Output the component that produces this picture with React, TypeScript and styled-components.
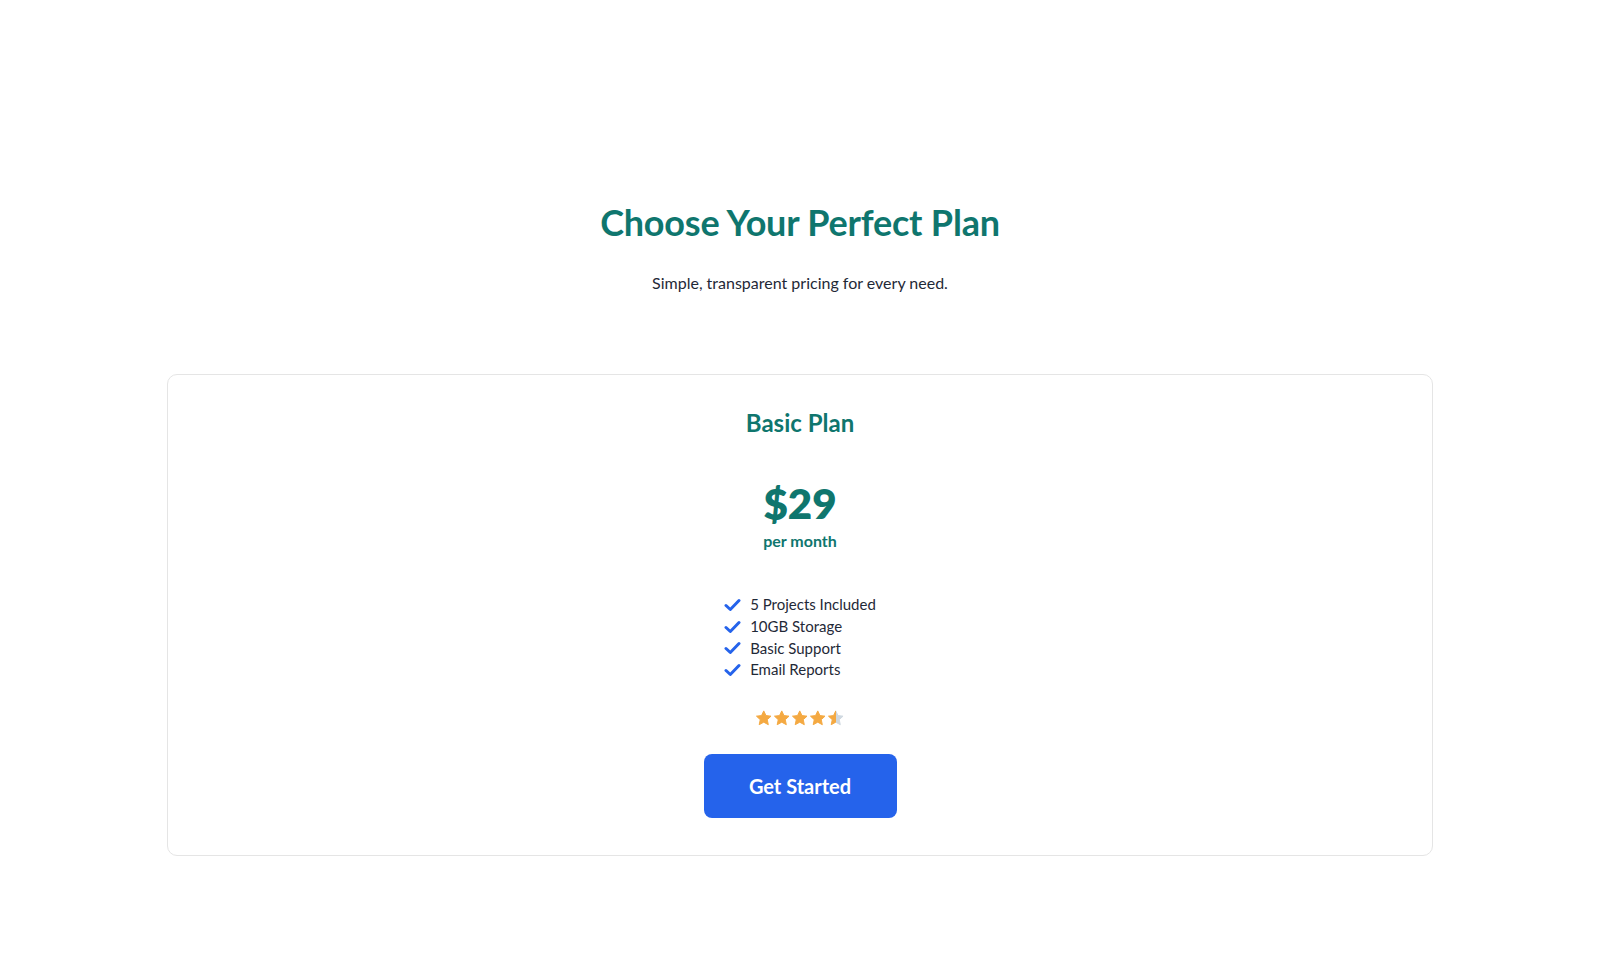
import styled, { createGlobalStyle } from 'styled-components';

const GlobalStyle = createGlobalStyle`
  body {
    margin: 0;
    background: #ffffff;
    font-family: Lato, "Open Sans", sans-serif;
  }
`;

const teal = '#0f766e';
const blue = '#2563eb';

const Page = styled.main`
  display: flex;
  flex-direction: column;
  align-items: center;
  padding: 200px 167px 120px;
`;

const Title = styled.h1`
  margin: 0;
  font-size: 36px;
  line-height: 44px;
  font-weight: 700;
  color: ${teal};
  letter-spacing: -0.2px;
`;

const Subtitle = styled.p`
  margin: 27px 0 0;
  font-size: 16px;
  line-height: 24px;
  color: #1f2937;
`;

const Card = styled.section`
  margin-top: 79px;
  width: 100%;
  box-sizing: border-box;
  border: 1px solid #e5e5e5;
  border-radius: 10px;
  padding: 32px 24px 37px;
  display: flex;
  flex-direction: column;
  align-items: center;
`;

const PlanName = styled.h2`
  margin: 0;
  font-size: 24px;
  line-height: 32px;
  font-weight: 700;
  color: ${teal};
`;

const Price = styled.div`
  margin-top: 40px;
  font-size: 42px;
  line-height: 48px;
  font-weight: 800;
  color: ${teal};
`;

const Period = styled.div`
  margin-top: 3px;
  font-size: 16px;
  line-height: 22px;
  font-weight: 700;
  color: ${teal};
`;

const Features = styled.ul`
  list-style: none;
  margin: 42px 0 0;
  padding: 0;
  display: flex;
  flex-direction: column;
`;

const Feature = styled.li`
  display: flex;
  align-items: center;
  gap: 9px;
  font-size: 15px;
  line-height: 21.8px;
  color: #1f2937;
`;

const Stars = styled.div`
  margin-top: 28px;
  display: flex;
  gap: 0.5px;
  height: 18px;
`;

const Button = styled.button`
  margin-top: 27px;
  width: 193px;
  height: 64px;
  border: none;
  border-radius: 8px;
  background: ${blue};
  color: #ffffff;
  font-family: inherit;
  font-size: 20px;
  font-weight: 700;
  cursor: pointer;
`;

const Check = () => (
  <svg width="17" height="14" viewBox="0 0 17 14">
    <path d="M2 7.5 L6.3 11.5 L15 2.5" fill="none" stroke={blue} strokeWidth="3" strokeLinecap="round" strokeLinejoin="round" />
  </svg>
);

const starPath =
  'M9 1.2 L11.3 6 L16.5 6.6 L12.6 10.2 L13.7 15.4 L9 12.8 L4.3 15.4 L5.4 10.2 L1.5 6.6 L6.7 6 Z';

const Star = ({ fill, id }: { fill: number; id: string }) => (
  <svg width="17.5" height="18" viewBox="0 0 18 17">
    <defs>
      <linearGradient id={id} x1="0" x2="1" y1="0" y2="0">
        <stop offset={fill} stopColor="#f4a942" />
        <stop offset={fill} stopColor="#cfd8e0" />
      </linearGradient>
    </defs>
    <path d={starPath} fill={`url(#${id})`} strokeLinejoin="round" stroke={`url(#${id})`} strokeWidth="1" />
  </svg>
);

const features = ['5 Projects Included', '10GB Storage', 'Basic Support', 'Email Reports'];
const rating = 4.5;

const App = () => (
  <>
    <GlobalStyle />
    <Page>
      <Title>Choose Your Perfect Plan</Title>
      <Subtitle>Simple, transparent pricing for every need.</Subtitle>
      <Card>
        <PlanName>Basic Plan</PlanName>
        <Price>$29</Price>
        <Period>per month</Period>
        <Features>
          {features.map((f) => (
            <Feature key={f}>
              <Check />
              {f}
            </Feature>
          ))}
        </Features>
        <Stars>
          {[0, 1, 2, 3, 4].map((i) => (
            <Star key={i} id={`star-${i}`} fill={Math.max(0, Math.min(1, rating - i))} />
          ))}
        </Stars>
        <Button>Get Started</Button>
      </Card>
    </Page>
  </>
);

export default App;
